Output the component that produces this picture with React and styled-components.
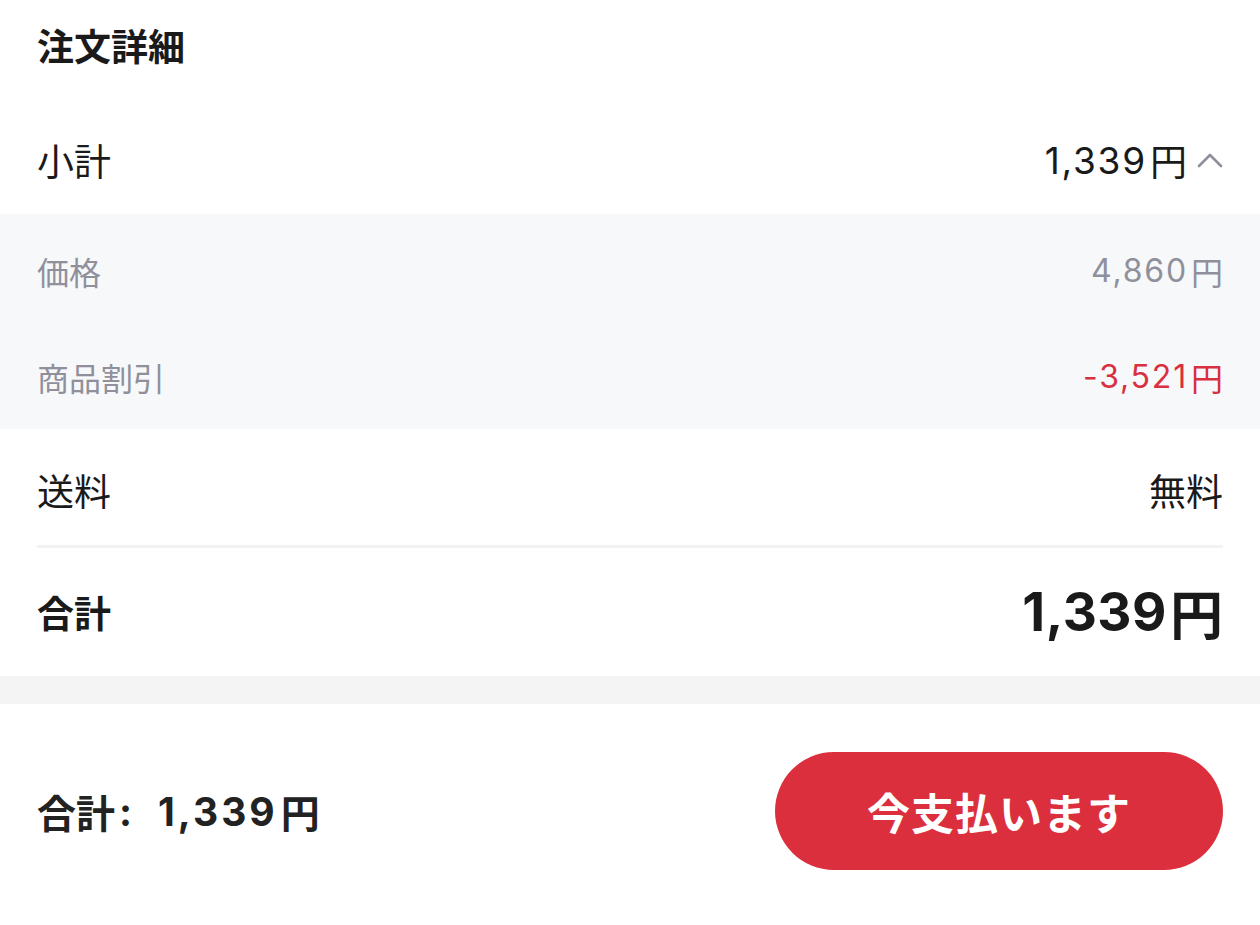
import React from 'react'
import styled, { createGlobalStyle } from 'styled-components'

const Global = createGlobalStyle`
    html, body {
        margin: 0;
        padding: 0;
        background: #ffffff;
    }
    body {
        font-family: "Inter", "Noto Sans CJK JP", "Noto Sans", sans-serif;
        color: #1a1a1a;
    }
`

const Page = styled.div`
    width: 1260px;
    min-height: 925px;
    display: flex;
    flex-direction: column;
    background: #ffffff;
`

const Title = styled.div`
    height: 92px;
    padding: 0 37px 2px;
    box-sizing: border-box;
    display: flex;
    align-items: center;
    font-size: 37px;
    font-weight: 700;
`

const Row = styled.div`
    display: flex;
    align-items: center;
    justify-content: space-between;
    height: ${p => p.h}px;
    padding: ${p => p.pt || 0}px 37px 0;
    box-sizing: border-box;
    font-size: ${p => p.size || 37}px;
    font-weight: ${p => (p.bold ? 700 : 400)};
    color: ${p => p.color || '#1a1a1a'};
`

const Muted = styled.div`
    background: #f7f8fa;
    padding-top: 3px;
`

const Value = styled.span`
    display: flex;
    align-items: center;
    font-size: ${p => p.size || 'inherit'};
    font-weight: ${p => (p.bold ? 700 : 'inherit')};
    color: ${p => p.color || 'inherit'};
`

const Digits = styled.span`
    letter-spacing: ${p => p.spacing || 1.8}px;
`

const Yen = styled.span`
    margin-left: 3px;
`

const Chevron = styled.svg`
    margin-left: 10px;
    width: 26px;
    height: 16px;
`

const Divider = styled.div`
    height: 3px;
    margin: 0 37px;
    background: #f2f2f2;
`

const Band = styled.div`
    height: 28px;
    background: #f4f4f4;
`

const BottomBar = styled.div`
    display: flex;
    align-items: center;
    justify-content: space-between;
    padding: 48px 37px 0;
`

const BottomTotal = styled.div`
    display: flex;
    align-items: center;
    font-size: 39px;
    font-weight: 700;
    color: #222;
`

const Colon = styled.span`
    margin: 0 26px 0 4px;
`

const PayButton = styled.button`
    width: 448px;
    height: 118px;
    border: none;
    border-radius: 59px;
    background: #dc2f3e;
    color: #ffffff;
    font-family: "Noto Sans CJK JP", "Noto Sans", sans-serif;
    font-size: 43px;
    font-weight: 600;
    letter-spacing: 1px;
    cursor: pointer;
`

function Price({ amount, spacing, ...rest }) {
    return (
        <Value {...rest}>
            <Digits spacing={spacing}>{amount}</Digits>
            <Yen>円</Yen>
        </Value>
    )
}

export default function App() {
    return (
        <Page>
            <Global />
            <Title>注文詳細</Title>

            <Row h={122} pt={14}>
                <span>小計</span>
                <Value>
                    <Digits>1,339</Digits>
                    <Yen>円</Yen>
                    <Chevron viewBox="0 0 26 16">
                        <path d="M2 14 L13 3 L24 14" fill="none" stroke="#8e8f9c" strokeWidth="2.6" strokeLinecap="round" strokeLinejoin="round" />
                    </Chevron>
                </Value>
            </Row>

            <Muted>
                <Row h={107} size={32} color="#8f909c">
                    <span>価格</span>
                    <Price amount="4,860" />
                </Row>
                <Row h={105} size={32} color="#8f909c">
                    <span>商品割引</span>
                    <Price amount="-3,521" color="#d9303f" />
                </Row>
            </Muted>

            <Row h={116} pt={6}>
                <span>送料</span>
                <span>無料</span>
            </Row>
            <Divider />
            <Row h={128} bold>
                <span>合計</span>
                <Price amount="1,339" size="53px" spacing={0.5} bold />
            </Row>

            <Band />

            <BottomBar>
                <BottomTotal>
                    合計<Colon>:</Colon>
                    <Digits spacing={3}>1,339</Digits>
                    <Yen>円</Yen>
                </BottomTotal>
                <PayButton>今支払います</PayButton>
            </BottomBar>
        </Page>
    )
}
